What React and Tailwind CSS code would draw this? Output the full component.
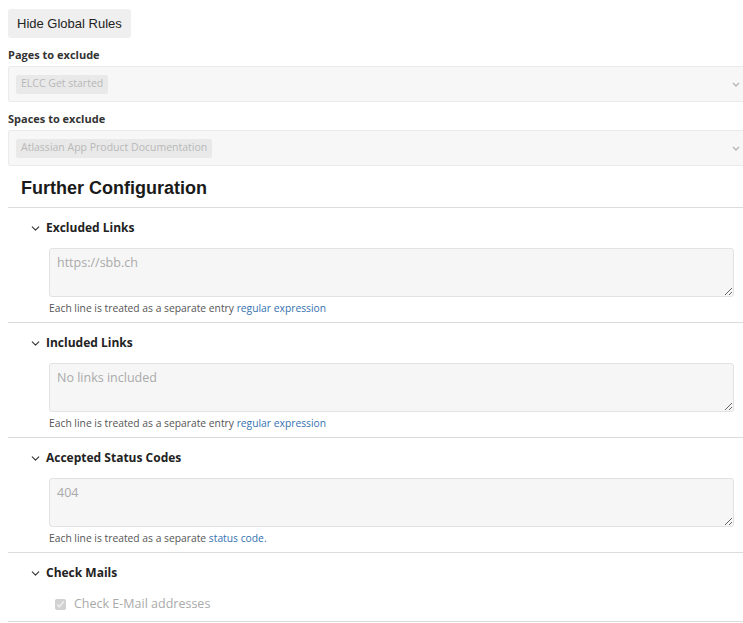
import { ChevronDown } from 'lucide-react';

const ubuntu = { fontFamily: '"Open Sans", "Noto Sans", sans-serif' };

function Chip({ children }) {
  return (
    <span className="inline-flex items-center h-[19px] px-[5px] rounded-[2px] bg-[#e9e9e9] text-[10.5px] text-[#b8b8b8]">
      {children}
    </span>
  );
}

function SelectBox({ label, value }) {
  return (
    <div>
      <div className="text-[11px] font-bold text-[#333] leading-[14px] mb-[4px]">{label}</div>
      <div className="w-[737px] h-[36px] bg-[#f7f7f7] border border-[#ebebeb] border-r-0 rounded-l-[3px] flex items-center pl-[7px] pr-[5px]">
        <Chip>{value}</Chip>
        <svg className="ml-auto w-[8px] h-[5px]" viewBox="0 0 8 5">
          <path d="M1 1l3 3 3-3" fill="none" stroke="#b5b5b5" strokeWidth="1.4" />
        </svg>
      </div>
    </div>
  );
}

function Section({ title, children }) {
  return (
    <div className="border-b border-[#dcdcdc]">
      <div className="flex items-center h-[20px] mt-[10px] pl-[21px] gap-[4px]">
        <ChevronDown className="w-[13px] h-[13px] text-[#333]" strokeWidth={2} />
        <span className="text-[12px] font-bold text-[#222]">{title}</span>
      </div>
      <div className="pl-[41px] pr-[9px]">{children}</div>
    </div>
  );
}

function TextBlock({ placeholder, hint, link }) {
  return (
    <div className="pt-[10px] pb-[7px]">
      <textarea
        readOnly
        placeholder={placeholder}
        className="block w-full h-[49px] bg-[#f6f6f6] border border-[#e2e2e2] rounded-[3px] px-[7px] py-[5px] text-[12.5px] placeholder:text-[#aaa] resize-y outline-none"
        style={ubuntu}
      />
      <div className="mt-[4px] text-[10.3px] text-[#555] leading-[14px]">
        {hint} <span className="text-[#3572b0]">{link}</span>
      </div>
    </div>
  );
}

export default function App() {
  return (
    <div className="w-[743px] h-[623px] bg-white overflow-hidden pl-[8px] pt-[9px]" style={ubuntu}>
      <button
        className="h-[29px] px-[9px] bg-[#efefef] rounded-[3px] text-[13px] text-[#222]"
        style={{ fontFamily: '"Liberation Sans", Arial, sans-serif' }}
      >
        Hide Global Rules
      </button>

      <div className="mt-[10px] flex flex-col gap-[10px]">
        <SelectBox label="Pages to exclude" value="ELCC Get started" />
        <SelectBox label="Spaces to exclude" value="Atlassian App Product Documentation" />
      </div>

      <h2
        className="mt-[10px] pl-[13px] pb-[7px] text-[18px] font-bold text-[#1a1a1a] leading-[24px] border-b border-[#dcdcdc]"
        style={{ fontFamily: '"Liberation Sans", Arial, sans-serif' }}
      >
        Further Configuration
      </h2>

      <Section title="Excluded Links">
        <TextBlock placeholder="https://sbb.ch" hint="Each line is treated as a separate entry" link="regular expression" />
      </Section>
      <Section title="Included Links">
        <TextBlock placeholder="No links included" hint="Each line is treated as a separate entry" link="regular expression" />
      </Section>
      <Section title="Accepted Status Codes">
        <TextBlock placeholder="404" hint="Each line is treated as a separate" link="status code." />
      </Section>
      <Section title="Check Mails">
        <label className="flex items-center gap-[8px] h-[22px] mt-[10px] mb-[6px] pl-[6px]">
          <input type="checkbox" checked disabled readOnly className="w-[11px] h-[11px] m-0" />
          <span className="text-[12.5px] text-[#aaa]">Check E-Mail addresses</span>
        </label>
      </Section>
    </div>
  );
}
